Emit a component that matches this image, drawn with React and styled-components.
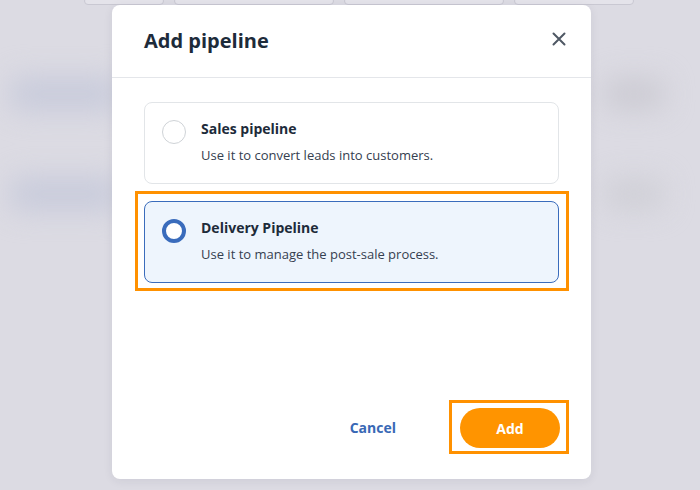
import React, { useState } from "react";
import styled, { createGlobalStyle, css } from "styled-components";

const GlobalStyle = createGlobalStyle`
  * { box-sizing: border-box; }
  html, body {
    margin: 0;
    padding: 0;
    width: 700px;
    height: 490px;
    overflow: hidden;
    font-family: "Open Sans", "Noto Sans", sans-serif;
    color: #1e2b3a;
  }
`;

/* PAGE BEHIND THE MODAL (blurred) */
const Page = styled.div`
  position: relative;
  width: 700px;
  height: 490px;
  background: #dcdbe3;
  overflow: hidden;
`;

const PageContent = styled.div`
  display: flex;
  flex-direction: column;
  gap: 66px;
  padding: 72px 36px 0 10px;
  filter: blur(14px);
`;

const GhostRow = styled.div`
  display: flex;
  justify-content: space-between;
  align-items: center;
`;

const GhostBlock = styled.div`
  width: ${(p) => p.$w}px;
  height: ${(p) => p.$h}px;
  border-radius: 10px;
  background: ${(p) => p.$color};
`;

const TopTabs = styled.div`
  display: flex;
  gap: 10px;
  padding: 0 0 0 84px;
  margin-top: -3px;
`;

const GhostTab = styled.div`
  width: ${(p) => p.$w}px;
  height: 8px;
  border: 1px solid #c9c8d2;
  border-radius: 4px;
  background: #e4e3ea;
`;

/* OVERLAY + MODAL */
const Overlay = styled.div`
  position: absolute;
  inset: 0;
  padding: 5px 0 0 112px;
`;

const Modal = styled.div`
  width: 479px;
  height: 474px;
  background: #ffffff;
  border-radius: 8px;
  box-shadow: 0 2px 10px rgba(40, 40, 70, 0.08);
  display: flex;
  flex-direction: column;
`;

const Header = styled.div`
  height: 73px;
  display: flex;
  align-items: center;
  justify-content: space-between;
  padding: 0 22px 0 32px;
  border-bottom: 1px solid #e4e6ea;
`;

const Title = styled.h2`
  margin: 0;
  font-size: 20px;
  font-weight: 700;
  color: #1d2b3a;
  padding-bottom: 1px;
`;

const CloseButton = styled.button`
  width: 20px;
  height: 20px;
  padding: 0;
  border: none;
  background: none;
  display: flex;
  align-items: center;
  justify-content: center;
  cursor: pointer;
  margin-bottom: 5px;
`;

const Body = styled.div`
  flex: 1;
  display: flex;
  flex-direction: column;
  gap: 17px;
  padding: 24px 32px 0;
`;

/* ORANGE FOCUS FRAME */
const Highlight = styled.div`
  ${(p) =>
    p.$on &&
    css`
      border: 3px solid #ff9100;
      margin: ${p.$margin};
      padding: ${p.$padding};
    `}
`;

const Option = styled.label`
  display: flex;
  align-items: flex-start;
  gap: 15px;
  height: 82px;
  padding: 16px 16px 0 17px;
  border-radius: 8px;
  cursor: pointer;
  border: 1px solid ${(p) => (p.$selected ? "#3a6cbc" : "#e2e5e8")};
  background: ${(p) => (p.$selected ? "#eef5fd" : "#ffffff")};
`;

const Radio = styled.span`
  flex: none;
  width: 24px;
  height: 24px;
  border-radius: 50%;
  margin-top: 1px;
  background: #ffffff;
  border: ${(p) => (p.$checked ? "4px solid #3a6cbc" : "1px solid #cfd3d7")};
`;

const OptionText = styled.div`
  display: flex;
  flex-direction: column;
  gap: 6px;
`;

const OptionTitle = styled.span`
  font-size: 14px;
  font-weight: 700;
  line-height: 20px;
  color: #1d2b3a;
`;

const OptionDesc = styled.span`
  font-size: 13px;
  line-height: 20px;
  color: #354050;
`;

const Footer = styled.div`
  display: flex;
  align-items: center;
  justify-content: flex-end;
  gap: 53px;
  padding: 0 22px 25px 0;
`;

const TextButton = styled.button`
  border: none;
  background: none;
  font-family: inherit;
  font-size: 14px;
  font-weight: 700;
  color: #3868b5;
  padding: 0;
  cursor: pointer;
`;

const ButtonFrame = styled.div`
  border: 3px solid #ff9100;
  padding: 5px 6px 3px 8px;
`;

const PrimaryButton = styled.button`
  width: 100px;
  height: 40px;
  border: none;
  border-radius: 20px;
  background: #ff9400;
  color: #ffffff;
  font-family: inherit;
  font-size: 14px;
  font-weight: 700;
  cursor: pointer;
  display: block;
`;

const options = [
  {
    id: "sales",
    title: "Sales pipeline",
    desc: "Use it to convert leads into customers.",
  },
  {
    id: "delivery",
    title: "Delivery Pipeline",
    desc: "Use it to manage the post-sale process.",
  },
];

const App = () => {
  const [selected, setSelected] = useState("delivery");

  return (
    <>
      <GlobalStyle />
      <Page>
        <TopTabs>
          <GhostTab $w={80} />
          <GhostTab $w={160} />
          <GhostTab $w={160} />
          <GhostTab $w={120} />
        </TopTabs>
        <PageContent>
          <GhostRow>
            <GhostBlock $w={110} $h={34} $color="#c8cbdb" />
            <GhostBlock $w={60} $h={30} $color="#cbcad2" />
          </GhostRow>
          <GhostRow>
            <GhostBlock $w={110} $h={34} $color="#c8cbdb" />
            <GhostBlock $w={60} $h={30} $color="#cfcfd6" />
          </GhostRow>
        </PageContent>

        <Overlay>
          <Modal>
            <Header>
              <Title>Add pipeline</Title>
              <CloseButton aria-label="Close">
                <svg width="14" height="14" viewBox="0 0 14 14">
                  <path
                    d="M1.5 1.5 L12.5 12.5 M12.5 1.5 L1.5 12.5"
                    stroke="#4f5864"
                    strokeWidth="2"
                    strokeLinecap="round"
                  />
                </svg>
              </CloseButton>
            </Header>

            <Body>
              {options.map((o) => {
                const isOn = selected === o.id;
                return (
                  <Highlight
                    key={o.id}
                    $on={isOn}
                    $margin="-10px -10px -8px -9px"
                    $padding="7px 7px 5px 6px"
                  >
                    <Option $selected={isOn} onClick={() => setSelected(o.id)}>
                      <Radio $checked={isOn} />
                      <OptionText>
                        <OptionTitle>{o.title}</OptionTitle>
                        <OptionDesc>{o.desc}</OptionDesc>
                      </OptionText>
                    </Option>
                  </Highlight>
                );
              })}
            </Body>

            <Footer>
              <TextButton>Cancel</TextButton>
              <ButtonFrame>
                <PrimaryButton>Add</PrimaryButton>
              </ButtonFrame>
            </Footer>
          </Modal>
        </Overlay>
      </Page>
    </>
  );
};

export default App;
